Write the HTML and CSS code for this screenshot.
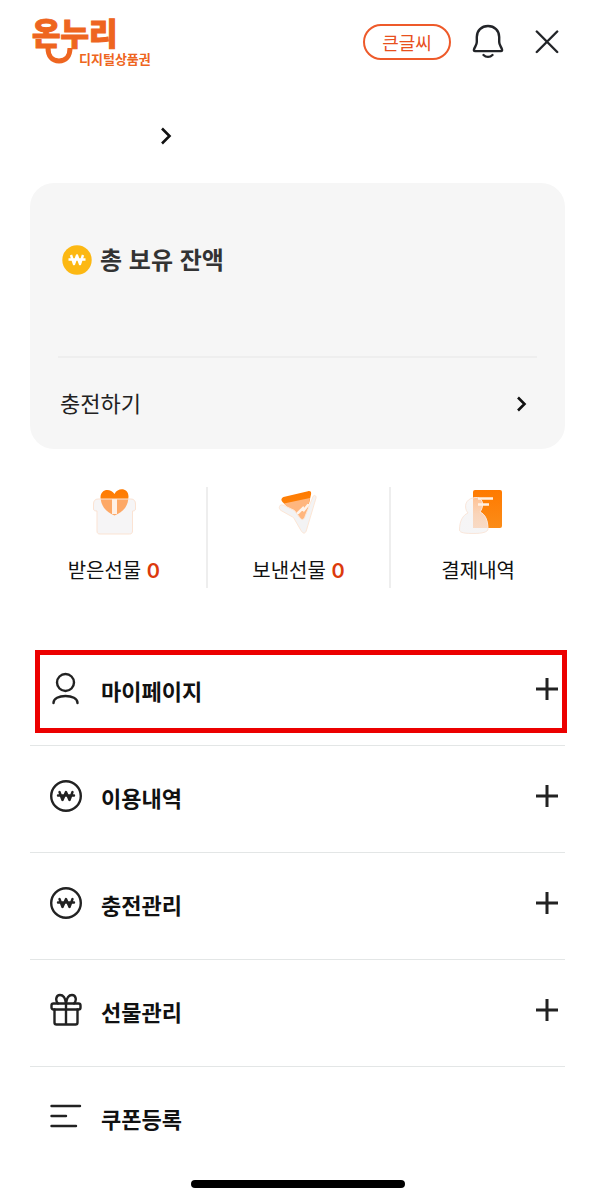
FILE: index.html
```html
<!DOCTYPE html>
<html lang="ko">
<head>
<meta charset="utf-8">
<meta name="viewport" content="width=device-width, initial-scale=1">
<title>온누리 디지털상품권</title>
<link rel="stylesheet" href="styles.css">
</head>
<body>
<div class="screen">
  <header class="header">
    <a class="logo" href="#">
      <span class="logo-name">온누리</span>
      <svg class="logo-smile" width="28" height="17" viewBox="0 0 28 17" aria-hidden="true"><path d="M3 0C3 8 7 13 14 13S25 8 25 0" fill="none" stroke="#ee6520" stroke-width="5"/></svg>
      <span class="logo-sub">디지털상품권</span>
    </a>
    <div class="header-actions">
      <button class="large-text" type="button">큰글씨</button>
      <button class="icon-button" type="button" aria-label="알림">
        <svg width="32" height="36" viewBox="0 0 32 36" fill="none" stroke="#222428" stroke-width="2.400" stroke-linecap="round" stroke-linejoin="round"><path d="M16 2C9.500 2 4.800 6.700 4.800 13V18C4.800 21 2.600 23 2 25.500C1.700 26.700 2.200 27.100 3 27.100H29C29.800 27.100 30.300 26.700 30 25.500C29.400 23 27.200 21 27.200 18V13C27.200 6.700 22.500 2 16 2Z"/><path d="M11.500 31C14 33.500 18 33.500 20.500 31"/></svg>
      </button>
      <button class="icon-button" type="button" aria-label="닫기">
        <svg width="24" height="24" viewBox="0 0 24 24" fill="none" stroke="#222428" stroke-width="2.400" stroke-linecap="round"><path d="M1.800 1.500 22.200 22M22.200 1.500 1.800 22"/></svg>
      </button>
    </div>
  </header>

  <main>
    <a class="profile" href="#" aria-label="내 정보">
      <svg width="12" height="18" viewBox="0 0 12 18" fill="none" stroke="#111" stroke-width="2.600"><path d="M2 1.500 9.500 9 2 16.500"/></svg>
    </a>

    <section class="balance">
      <h2 class="balance-title">
        <svg width="30" height="30" viewBox="0 0 30 30" aria-hidden="true"><circle cx="15" cy="15" r="14.700" fill="#fcb813"/><path d="M9 10 12 19 15 10.500 18 19 21 10M6.500 14.500H23.500" fill="none" stroke="#fff" stroke-width="2.400" stroke-linejoin="round"/></svg>
        <span>총 보유 잔액</span>
      </h2>
      <a class="charge" href="#">
        <span>충전하기</span>
        <svg width="12" height="16" viewBox="0 0 12 16" fill="none" stroke="#111" stroke-width="2.600"><path d="M2 1.500 8.500 8 2 14.500"/></svg>
      </a>
    </section>

    <nav class="shortcuts" aria-label="선물 및 결제">
      <a class="shortcut" href="#">
        <svg width="48" height="48" viewBox="0 0 48 48" aria-hidden="true">
          <defs>
            <linearGradient id="orange" x1="0" y1="0" x2="0" y2="1"><stop offset="0" stop-color="#ff7a00"/><stop offset="1" stop-color="#fb8c18"/></linearGradient>
            <linearGradient id="glass" x1="0" y1="0" x2="0" y2="1"><stop offset="0" stop-color="#fff" stop-opacity=".3"/><stop offset=".55" stop-color="#f5f5f6" stop-opacity=".85"/><stop offset="1" stop-color="#f5f5f6"/></linearGradient>
          </defs>
          <path d="M24.500 28C16 24 10.500 18 10.500 10.500C10.500 2 20 .500 24.500 7C28 0 38.500 1 38.500 9.500C38.500 18 33 25 24.500 28Z" fill="url(#orange)"/>
          <path d="M8 12H41C44 12 45.500 14 45.500 17V22C45.500 23.500 44 24 42.500 24V44C42.500 46 41.500 47 39.500 47H10C8 47 7 46 7 44V24C5 24 3.500 23.500 3.500 22V17C3.500 14 5 12 8 12Z" fill="#f6f5f6"/>
          <path d="M10.700 12H38.300C37.500 20 32.500 25.500 24.500 28.500C16.500 25 11.500 20 10.700 12Z" fill="#fda866"/>
          <path d="M22 12H27V27H22Z" fill="#fff0e5"/>
          <path d="M8 12H41C44 12 45.500 14 45.500 17V22C45.500 23.500 44 24 42.500 24V44C42.500 46 41.500 47 39.500 47H10C8 47 7 46 7 44V24C5 24 3.500 23.500 3.500 22V17C3.500 14 5 12 8 12Z" fill="none" stroke="#fbe3d3"/>
        </svg>
        <span>받은선물 <strong>0</strong></span>
      </a>
      <a class="shortcut" href="#">
        <svg width="48" height="48" viewBox="0 0 48 48" aria-hidden="true">
          <path d="M9.500 10 34 4.200C36.500 3.500 37.500 5 37 7.500L31.500 32C31 34.500 28 35 26.500 33L8.500 15C6.500 13 7.500 11 9.500 10Z" fill="url(#orange)"/>
          <path d="M10 16.500 36 11 31.500 32C31 34.500 28 35 26.500 33Z" fill="#ffb67e"/>
          <path d="M5.500 19.500C6 17.500 8 17.500 10 18.500L20.500 23.500L26 31C28 33.500 30 32.500 31 29.500L39 9.500C40 7.500 42.500 8.500 42 11L32.500 43C31.500 47 29 47 27 43.500L19.500 30.500L7 23.500C5.500 22.500 5 21 5.500 19.500Z" fill="#f3f3f4" stroke="#fde6d5"/>
          <path d="M24 26 29 21 30 23 34 18" fill="none" stroke="#fff4eb" stroke-width="2.500" stroke-linecap="round"/>
        </svg>
        <span>보낸선물 <strong>0</strong></span>
      </a>
      <a class="shortcut" href="#">
        <svg width="48" height="48" viewBox="0 0 48 48" aria-hidden="true">
          <g transform="translate(2 0)">
            <rect x="17" y="3" width="29" height="38" rx="2" fill="url(#orange)"/>
            <clipPath id="person"><path d="M17 11C23 9 27 13 26.500 18C26.300 21 25.500 23 24 25C29 27 32 33 32 42C32 45 26 46.500 18 46.500S3.500 46 3.500 43C3.500 34 7 28 12 26C7 20 10 12 17 11Z"/></clipPath>
            <g clip-path="url(#person)"><rect width="48" height="48" fill="#f7f5f5"/><rect x="17" y="3" width="30" height="38" fill="#ffa663"/><rect y="3" width="48" height="45" fill="url(#glass)" opacity=".7"/></g>
            <path d="M17 11C23 9 27 13 26.500 18C26.300 21 25.500 23 24 25C29 27 32 33 32 42C32 45 26 46.500 18 46.500S3.500 46 3.500 43C3.500 34 7 28 12 26C7 20 10 12 17 11Z" fill="none" stroke="#fae7db"/>
            <path d="M22 11.500H37M22 17.500H33" stroke="#fff1e4" stroke-width="2.500"/>
          </g>
        </svg>
        <span>결제내역</span>
      </a>
    </nav>

    <ul class="menu">
      <li class="highlighted">
        <button class="menu-row" type="button">
          <svg class="menu-icon" width="32" height="34" viewBox="0 0 32 34"><circle cx="15.500" cy="10.500" r="8.500"/><path d="M3.500 31C3.500 26.500 9 24 15.500 24S27.500 26.500 27.500 31"/></svg>
          <span>마이페이지</span>
          <svg class="plus" width="22" height="22" viewBox="0 0 22 22"><path d="M11 0V22M0 11H22"/></svg>
        </button>
      </li>
      <li>
        <button class="menu-row" type="button">
          <svg class="menu-icon" width="32" height="34" viewBox="0 0 32 34"><circle cx="16" cy="17" r="14.800"/><path d="M9.500 13 12.500 21 16 13 19.500 21 22.500 13M8 16.500H24"/></svg>
          <span>이용내역</span>
          <svg class="plus" width="22" height="22" viewBox="0 0 22 22"><path d="M11 0V22M0 11H22"/></svg>
        </button>
      </li>
      <li>
        <button class="menu-row" type="button">
          <svg class="menu-icon" width="32" height="34" viewBox="0 0 32 34"><circle cx="16" cy="17" r="14.800"/><path d="M9.500 13 12.500 21 16 13 19.500 21 22.500 13M8 16.500H24"/></svg>
          <span>충전관리</span>
          <svg class="plus" width="22" height="22" viewBox="0 0 22 22"><path d="M11 0V22M0 11H22"/></svg>
        </button>
      </li>
      <li>
        <button class="menu-row" type="button">
          <svg class="menu-icon" width="32" height="34" viewBox="0 0 32 34"><rect x="1.500" y="10.500" width="29" height="6" rx="2"/><path d="M4.500 16.500V29.500C4.500 31 5.500 31.500 6.500 31.500H25.500C26.500 31.500 27.500 31 27.500 29.500V16.500M16 10.500V31.500M16 10.500C15.500 6 13.500 2 10 2C6 2 5 7.500 8 10.500M16 10.500C16.500 6 18.500 2 22 2C26 2 27 7.500 24 10.500"/></svg>
          <span>선물관리</span>
          <svg class="plus" width="22" height="22" viewBox="0 0 22 22"><path d="M11 0V22M0 11H22"/></svg>
        </button>
      </li>
      <li>
        <a class="menu-row" href="#">
          <svg class="menu-icon" width="32" height="34" viewBox="0 0 32 34"><path d="M1.500 6H30M1.500 16H16M1.500 26H26"/></svg>
          <span>쿠폰등록</span>
        </a>
      </li>
    </ul>
  </main>
  <div class="home-indicator"></div>
</div>
</body>
</html>
```
FILE: styles.css
```css
* {
  box-sizing: border-box;
}

body {
  margin: 0;
  background: #fff;
  color: #111;
  font-family: "Noto Sans CJK KR", "Noto Sans", sans-serif;
}

a {
  color: inherit;
  text-decoration: none;
}

button {
  padding: 0;
  border: 0;
  background: none;
  color: inherit;
  font: inherit;
  cursor: pointer;
}

svg {
  display: block;
  flex: none;
}

.screen {
  padding: 16px 30px 12px;
}

.header {
  display: flex;
  align-items: center;
  justify-content: space-between;
  height: 52px;
  padding-right: 6px;
}

.logo {
  position: relative;
  display: flex;
  flex-direction: column;
  gap: 5px;
  padding-left: 2px;
  color: #ee6520;
}

.logo-name {
  font-size: 31px;
  font-weight: 900;
  line-height: 28px;
  -webkit-text-stroke: 1px #ee6520;
}

.logo-smile {
  position: absolute;
  top: 30px;
  left: 15px;
}

.logo-sub {
  padding-left: 47px;
  font-size: 13px;
  font-weight: 700;
  line-height: 16px;
}

.header-actions {
  display: flex;
  align-items: center;
}

.large-text {
  width: 88px;
  height: 36px;
  margin-right: 21px;
  border: 2px solid #ee5a2a;
  border-radius: 18px;
  color: #e8501e;
  font-size: 18px;
  line-height: 28px;
}

.icon-button + .icon-button {
  margin-left: 31px;
}

.profile {
  display: flex;
  align-items: center;
  height: 36px;
  margin-top: 50px;
  padding-left: 130px;
}

.balance {
  margin-top: 29px;
  padding: 60px 28px 0;
  border-radius: 24px;
  background: #f6f6f6;
}

.balance-title {
  display: flex;
  align-items: center;
  gap: 8px;
  height: 113px;
  margin: 0;
  padding: 0 4px 79px;
  color: #333;
  font-size: 24px;
  font-weight: 700;
  line-height: 32px;
}

.balance-title span {
  padding-bottom: 2px;
}

.charge {
  display: flex;
  align-items: center;
  justify-content: space-between;
  height: 93px;
  padding: 0 9px 0 2px;
  border-top: 2px solid #eee;
  color: #222;
  font-size: 22px;
}

.charge span {
  padding-bottom: 4px;
}

.shortcuts {
  display: grid;
  grid-template-columns: repeat(3, 1fr);
  margin: 38px -8px 0;
}

.shortcut {
  display: flex;
  flex-direction: column;
  align-items: center;
  gap: 21px;
  height: 101px;
  font-size: 20px;
  line-height: 28px;
}

.shortcut + .shortcut {
  border-left: 2px solid #eee;
}

.shortcut:last-child {
  padding-right: 8px;
}

.shortcut strong {
  color: #dc3a0c;
  font-family: Inter, sans-serif;
  font-weight: 600;
}

.menu {
  margin: 51px 0 0;
  padding: 0;
  list-style: none;
}

.menu li + li {
  border-top: 1px solid #e3e6e6;
}

.menu-row {
  display: flex;
  align-items: center;
  gap: 19px;
  width: 100%;
  height: 106px;
  padding: 0 7px 4px 20px;
  font-size: 22px;
  font-weight: 700;
  text-align: left;
}

.menu-icon,
.plus {
  margin-bottom: 2px;
  fill: none;
  stroke: #222;
  stroke-width: 2.4;
  stroke-linecap: round;
  stroke-linejoin: round;
}

.plus {
  margin-left: auto;
  stroke-width: 3;
  stroke-linecap: butt;
}

.highlighted {
  position: relative;
}

.highlighted::after {
  content: "";
  position: absolute;
  inset: 11px -2px 12px 5px;
  border: 5px solid #ec0000;
  pointer-events: none;
}

.home-indicator {
  width: 40%;
  height: 8px;
  margin: 7px auto 0;
  border-radius: 4px;
  background: #000;
}
```
